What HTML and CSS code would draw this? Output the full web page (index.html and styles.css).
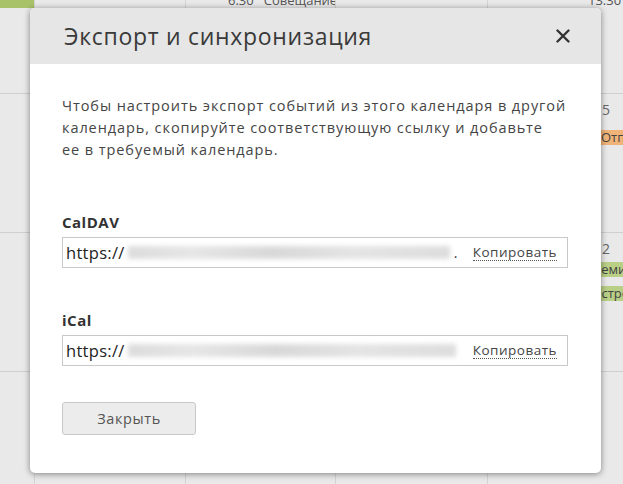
FILE: index.html
```html
<!DOCTYPE html>
<html lang="ru">
<head>
<meta charset="utf-8">
<title>Экспорт и синхронизация</title>
<link rel="stylesheet" href="styles.css">
</head>
<body>
<div class="calendar">
  <div class="week week-first">
    <div class="cell c1"><div class="bar-green-top"></div></div>
    <div class="cell c2"></div>
    <div class="cell c3"><div class="evt-top"><span class="time">6:30</span><span class="sq"></span><span>Совещание</span></div></div>
    <div class="cell c4"></div>
    <div class="cell c5"></div>
    <div class="cell c6"><div class="evt-top"><span class="time">13:30</span></div></div>
  </div>
  <div class="week">
    <div class="cell c1"></div>
    <div class="cell c2"></div>
    <div class="cell c3"></div>
    <div class="cell c4"></div>
    <div class="cell c5"></div>
    <div class="cell c6"><div class="daynum">5</div><div class="ev ev-orange">Отпуск</div></div>
  </div>
  <div class="week">
    <div class="cell c1"></div>
    <div class="cell c2"></div>
    <div class="cell c3"></div>
    <div class="cell c4"></div>
    <div class="cell c5"></div>
    <div class="cell c6"><div class="daynum">2</div><div class="ev ev-green ev-g1">Семинар</div><div class="ev ev-green ev-g2">Встреча</div></div>
  </div>
  <div class="week week-last">
    <div class="cell c1"></div>
    <div class="cell c2"></div>
    <div class="cell c3"></div>
    <div class="cell c4"></div>
    <div class="cell c5"></div>
    <div class="cell c6"></div>
  </div>
</div>

<div class="modal">
  <div class="modal-header">
    <h1 class="modal-title">Экспорт и синхронизация</h1>
    <button class="close" aria-label="Закрыть">
      <svg width="14" height="14" viewBox="0 0 14 14"><path d="M1.5 1.5 L12.5 12.5 M12.5 1.5 L1.5 12.5" stroke="#333" stroke-width="2.4" stroke-linecap="round" fill="none"/></svg>
    </button>
  </div>
  <div class="modal-body">
    <p class="intro">Чтобы настроить экспорт событий из этого календаря в другой<br>календарь, скопируйте соответствующую ссылку и добавьте<br>ее в требуемый календарь.</p>
    <div class="field field-first">
      <div class="label">CalDAV</div>
      <div class="input">
        <span class="proto">https://</span><span class="blur blur-1"></span><span class="dot">.</span>
        <span class="copy">Копировать</span>
      </div>
    </div>
    <div class="field">
      <div class="label">iCal</div>
      <div class="input">
        <span class="proto">https://</span><span class="blur blur-2"></span>
        <span class="copy">Копировать</span>
      </div>
    </div>
    <button class="btn-close">Закрыть</button>
  </div>
</div>
</body>
</html>
```
FILE: styles.css
```css
html, body {
  margin: 0;
  padding: 0;
}
body {
  width: 623px;
  height: 484px;
  overflow: hidden;
  background: #e9e9e9;
  font-family: "Open Sans", "Noto Sans", sans-serif;
  position: relative;
}
.calendar {
  display: flex;
  flex-direction: column;
  width: 623px;
  height: 484px;
  overflow: hidden;
}
.week {
  display: grid;
  grid-template-columns: 35px 151px 150px 152px 100px 35px;
  height: 139px;
  flex-shrink: 0;
  border-bottom: 1px solid #cfcfcf;
  box-sizing: border-box;
}
.week-first {
  height: 94px;
}
.week-last {
  height: 112px;
  border-bottom: none;
}
.cell {
  border-right: 1px solid #d4d4d4;
  box-sizing: border-box;
  overflow: hidden;
  font-size: 13px;
  color: #555;
}
.c5 { border-right: none; }
.c6 { border-right: none; overflow: visible; }
.bar-green-top {
  height: 8px;
  background: #a8c26a;
  margin-right: -1px;
}
.evt-top {
  display: flex;
  align-items: center;
  gap: 5px;
  margin-top: -8px;
  line-height: 16px;
  white-space: nowrap;
}
.c3 .evt-top { padding-left: 42px; }
.sq {
  width: 7px;
  height: 9px;
  background: #a8c26a;
}
.daynum {
  padding: 6px 0 0 14px;
  height: 22px;
  font-size: 14px;
  color: #666;
}
.ev {
  height: 15px;
  line-height: 15px;
  font-size: 13px;
  color: #444;
  white-space: nowrap;
  overflow: hidden;
}
.ev-orange { background: #f0b479; margin-top: 8px; padding-left: 13px; }
.ev-green { background: #b9cf86; padding-left: 5px; }
.ev-g1 { margin-top: 1px; }
.ev-g2 { margin-top: 9px; }

.modal {
  position: absolute;
  left: 30px;
  top: 8px;
  width: 571px;
  height: 465px;
  background: #fff;
  border-radius: 5px;
  box-shadow: 0 1px 6px rgba(0,0,0,0.45);
  overflow: hidden;
  display: flex;
  flex-direction: column;
}
.modal-header {
  height: 56px;
  background: #e6e6e6;
  display: flex;
  align-items: center;
  justify-content: space-between;
  padding: 0 31px 0 34px;
  flex-shrink: 0;
}
.modal-title {
  margin: 0;
  font-weight: 400;
  font-size: 23px;
  color: #3a3a3a;
  letter-spacing: 0.7px;
}
.close {
  border: none;
  background: none;
  padding: 0;
  width: 14px;
  height: 14px;
  display: flex;
}
.modal-body {
  padding: 31px 32px 0 32px;
  display: flex;
  flex-direction: column;
  align-items: flex-start;
}
.intro {
  margin: 0;
  font-size: 14.5px;
  letter-spacing: 0.92px;
  line-height: 22px;
  color: #454545;
  white-space: nowrap;
}
.field {
  margin-top: 43px;
  width: 506px;
}
.field-first { margin-top: 52px; }
.label {
  font-weight: 700;
  font-size: 15px;
  letter-spacing: 0.5px;
  color: #333;
  line-height: 18px;
  margin-bottom: 6px;
}
.input {
  box-sizing: border-box;
  height: 31px;
  border: 1px solid #c9c9c9;
  display: flex;
  align-items: center;
  padding: 0 10px 0 3px;
}
.proto {
  font-size: 16.5px;
  letter-spacing: 0.3px;
  color: #222;
}
.blur {
  height: 13px;
  background: linear-gradient(90deg, #dcdcdc, #e6e6e6 20%, #d8d8d8 45%, #e4e4e4 70%, #dddddd);
  filter: blur(2.5px);
  margin-left: 3px;
}
.blur-1 { width: 322px; }
.blur-2 { width: 328px; }
.dot {
  font-size: 14px;
  color: #333;
  margin-left: 4px;
}
.copy {
  margin-left: auto;
  font-size: 13.5px;
  letter-spacing: 0.5px;
  color: #444;
  border-bottom: 1px dotted #555;
  line-height: 15px;
}
.btn-close {
  margin-top: 36px;
  width: 134px;
  height: 33px;
  border: 1px solid #c8c8c8;
  border-radius: 3px;
  background: #ececec;
  font-family: "Open Sans", "Noto Sans", sans-serif;
  font-size: 14.5px;
  letter-spacing: 0.6px;
  color: #555;
}
```
